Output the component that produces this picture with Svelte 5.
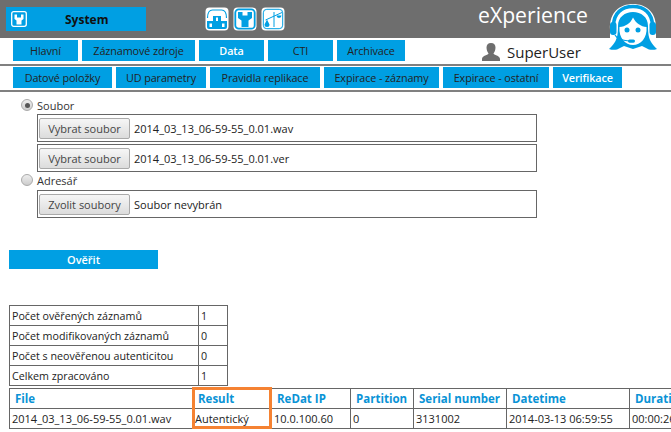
<script>
  const mainTabs = [
    { label: "Hlavní", w: 65 },
    { label: "Záznamové zdroje", w: 113 },
    { label: "Data", w: 65, active: true },
    { label: "CTI", w: 65 },
    { label: "Archivace", w: 68 },
  ];
  const subTabs = [
    { label: "Datové položky", w: 99 },
    { label: "UD parametry", w: 90 },
    { label: "Pravidla replikace", w: 110 },
    { label: "Expirace - záznamy", w: 115 },
    { label: "Expirace - ostatní", w: 106 },
    { label: "Verifikace", w: 69, active: true },
  ];
  const stats = [
    ["Počet ověřených záznamů", "1"],
    ["Počet modifikovaných záznamů", "0"],
    ["Počet s neověřenou autenticitou", "0"],
    ["Celkem zpracováno", "1"],
  ];
  const columns = [
    { label: "File", value: "2014_03_13_06-59-55_0.01.wav", w: 183 },
    { label: "Result", value: "Autentický", w: 79 },
    { label: "ReDat IP", value: "10.0.100.60", w: 79 },
    { label: "Partition", value: "0", w: 63 },
    { label: "Serial number", value: "3131002", w: 93 },
    { label: "Datetime", value: "2014-03-13 06:59:55", w: 123 },
    { label: "Duration", value: "00:00:26", w: 70 },
  ];
</script>

<div class="page">
  <header class="top">
    <div class="system">
      <svg class="sys-icon" viewBox="0 0 16 16" width="16" height="16">
        <rect x="0.7" y="0.7" width="14.6" height="14.6" rx="2" fill="none" stroke="#fff" stroke-width="1.3" />
        <path d="M3.500 3.500h2.500v3h4v-3h2.500v4.500l-2 1.500v4H5.500v-4l-2-1.500z" fill="#fff" />
      </svg>
      <span>System</span>
    </div>
    <div class="tools">
      <svg viewBox="0 0 24 24" width="24" height="24">
        <rect x="0.5" y="0.5" width="23" height="23" rx="4" fill="#fff" />
        <path d="M2.500 11c0-5 2-8 5-8h9c3 0 5 3 5 8" fill="none" stroke="#009fe3" stroke-width="1.200" />
        <path d="M2 14h6V9h8v5h6v6q0 2-2 2H4q-2 0-2-2z" fill="#009fe3" />
        <rect x="11" y="10.500" width="2" height="3.500" fill="#fff" />
        <rect x="4.500" y="16.500" width="2.500" height="3.500" fill="#fff" />
        <rect x="17" y="16.500" width="2.500" height="3.500" fill="#fff" />
      </svg>
      <svg viewBox="0 0 24 24" width="24" height="24">
        <rect x="0.5" y="0.5" width="23" height="23" rx="4" fill="#fff" />
        <rect x="2.300" y="2.300" width="19.400" height="19.400" rx="3.500" fill="none" stroke="#009fe3" stroke-width="1.800" />
        <path d="M5 5h4.500v3.500h5V5H19v6l-3.500 2.500V20h-7v-6.500L5 11z" fill="#009fe3" />
      </svg>
      <svg viewBox="0 0 24 24" width="24" height="24">
        <rect x="0.5" y="0.5" width="23" height="23" rx="4" fill="#fff" />
        <rect x="2.300" y="2.300" width="19.400" height="19.400" rx="3.500" fill="none" stroke="#009fe3" stroke-width="1" />
        <path d="M13 5v15M4.500 13L21 5.500" fill="none" stroke="#009fe3" stroke-width="1" />
        <path d="M3.500 17.500l2.500-5 2.500 5a2.500 2.500 0 0 1-5 0zM15.500 8.500h5a2.500 2.500 0 0 1-5 0z" fill="#009fe3" />
      </svg>
    </div>
    <div class="brand">eXperience</div>
  </header>

  <svg class="agent" viewBox="0 0 48 48" width="48" height="48">
    <path d="M1 26C0 8 11 0 24 0s24 8 23 26v8H1z" fill="#fff" />
    <path d="M4.500 22C4.500 9 13 2.500 24 2.500S43.500 9 43.500 22" fill="none" stroke="#009fe3" stroke-width="3.500" />
    <rect x="1" y="18" width="6.500" height="13" rx="3" fill="#009fe3" />
    <rect x="40.500" y="18" width="6.500" height="13" rx="3" fill="#009fe3" />
    <path d="M9 22C9 13 16 8 24 8s15 5 15 14c0 8 1 12 2.500 15 1.500 3 3.500 5 6.500 8-4 1.500-8 1-11-1l-4-2-9 3-9-3-4 2c-3 2-7 2.500-11 1 3-3 5-5 6.500-8C8 34 9 30 9 22z" fill="#009fe3" />
    <path d="M10.500 23c6-.5 11-3.500 13.500-9.500 3 6 8 9 13.500 9.500 1 11-6 18-13.500 18S9.500 34 10.500 23z" fill="#fff" />
    <circle cx="18" cy="26" r="2.500" fill="#009fe3" />
    <circle cx="29" cy="26" r="2.500" fill="#009fe3" />
    <path d="M6 31c2 4 7 5.500 14 6" fill="none" stroke="#009fe3" stroke-width="1.200" />
    <rect x="19" y="35.500" width="7" height="3.200" rx="1.600" fill="#009fe3" />
  </svg>

  <nav class="tabs main">
    {#each mainTabs as tab}
      <div class="tab" class:active={tab.active} style="width:{tab.w}px">{tab.label}</div>
    {/each}
    <div class="user">
      <svg viewBox="0 0 18 18" width="18" height="18">
        <path d="M9 0c3 0 4.500 2 4.500 4.500S12.500 9 11.500 10.500c0 1.500 6.500 2 6.500 5.500v2H0v-2c0-3.500 6.500-4 6.500-5.500C5.500 9 4.500 7 4.500 4.500S6 0 9 0z" fill="#6e6e6e" />
      </svg>
      <span>SuperUser</span>
    </div>
  </nav>
  <nav class="tabs sub">
    {#each subTabs as tab}
      <div class="tab" class:active={tab.active} style="width:{tab.w}px">{tab.label}</div>
    {/each}
  </nav>

  <section class="form">
    <label class="choice"><span class="radio checked"></span>Soubor</label>
    <div class="file first"><button>Vybrat soubor</button><span>2014_03_13_06-59-55_0.01.wav</span></div>
    <div class="file"><button>Vybrat soubor</button><span>2014_03_13_06-59-55_0.01.ver</span></div>
    <label class="choice"><span class="radio"></span>Adresář</label>
    <div class="file last"><button>Zvolit soubory</button><span>Soubor nevybrán</span></div>
  </section>

  <div class="verify">Ověřit</div>

  <table class="stats">
    <tbody>
      {#each stats as row}
        <tr><td class="name">{row[0]}</td><td>{row[1]}</td></tr>
      {/each}
    </tbody>
  </table>

  <div class="results-wrap">
    <table class="results">
      <colgroup>
        {#each columns as col}<col style="width:{col.w}px" />{/each}
      </colgroup>
      <thead>
        <tr>{#each columns as col}<th>{col.label}</th>{/each}</tr>
      </thead>
      <tbody>
        <tr>{#each columns as col}<td>{col.value}</td>{/each}</tr>
      </tbody>
    </table>
    <div class="highlight"></div>
  </div>
</div>

<style>
  :global(body) {
    margin: 0;
    background: #fff;
  }

  .page {
    position: relative;
    width: 671px;
    height: 432px;
    overflow: hidden;
    font-family: "Open Sans", "Noto Sans", sans-serif;
    font-size: 11px;
    color: #222;
  }

  .top {
    display: flex;
    align-items: center;
    height: 38px;
    background: #6e6e6e;
    padding-left: 6px;
    box-sizing: border-box;
  }

  .system {
    display: flex;
    align-items: center;
    width: 140px;
    height: 24px;
    box-sizing: border-box;
    padding-left: 5px;
    background: #009fe3;
    font-weight: 700;
    font-size: 12px;
    color: #111;
  }

  .system span {
    margin-left: 38px;
  }

  .tools {
    display: flex;
    gap: 4px;
    margin-left: 59px;
  }

  .brand {
    margin-left: 193px;
    margin-top: -10px;
    font-size: 21.200px;
    color: #fff;
  }

  .agent {
    position: absolute;
    left: 609px;
    top: 4px;
  }

  .tabs {
    display: flex;
    gap: 4px;
    padding-left: 13px;
    height: 21px;
  }

  .tabs.main {
    padding-top: 2px;
    padding-bottom: 3px;
    border-bottom: 2px solid #808080;
  }

  .tabs.sub {
    padding-top: 1px;
    padding-bottom: 2px;
    border-bottom: 2px solid #808080;
  }

  .tab {
    display: flex;
    align-items: center;
    justify-content: center;
    background: #009fe3;
    white-space: nowrap;
    font-size: 10.800px;
    letter-spacing: -0.1px;
  }

  .tab.active {
    color: #fff;
    font-weight: 600;
  }

  .user {
    display: flex;
    align-items: center;
    gap: 7px;
    margin: 2px 0 0 73px;
    font-size: 15px;
    color: #222;
  }

  .form {
    padding: 5px 0 0 21px;
    width: 516px;
  }

  .choice {
    display: flex;
    align-items: center;
    height: 16px;
    color: #333;
  }

  .radio {
    width: 12px;
    height: 12px;
    border-radius: 50%;
    box-sizing: border-box;
    border: 1px solid #aaa;
    background: linear-gradient(#eee, #ccc);
    margin-right: 4px;
    position: relative;
  }

  .radio.checked::after {
    content: "";
    position: absolute;
    left: 2.500px;
    top: 2.500px;
    width: 5px;
    height: 5px;
    border-radius: 50%;
    background: #555;
  }

  .file {
    display: flex;
    align-items: center;
    height: 28px;
    box-sizing: border-box;
    margin: 2px 0 0 16px;
    padding-left: 1px;
    border: 1px solid #666;
    background: #fff;
  }

  .file.first {
    margin-top: 1px;
  }

  .file.last {
    margin-top: 2px;
  }

  .file + .choice {
    margin-top: 0;
  }

  .file button {
    width: 91px;
    height: 21px;
    margin-right: 4px;
    padding: 0;
    border: 1px solid #aaa;
    border-radius: 2px;
    background: linear-gradient(#f6f6f6, #dcdcdc);
    font-family: inherit;
    font-size: 11px;
    color: #444;
  }

  .verify {
    display: flex;
    align-items: center;
    justify-content: center;
    width: 149px;
    height: 19px;
    margin: 32px 0 36px 9px;
    background: #009fe3;
    color: #fff;
    font-weight: 600;
  }

  table {
    border-collapse: collapse;
    font-size: 11px;
  }

  td, th {
    border: 1px solid #666;
    padding: 0 2px;
    height: 19px;
    white-space: nowrap;
    text-align: left;
  }

  .stats {
    margin-left: 9px;
    width: 219px;
    table-layout: fixed;
  }

  .stats td {
    font-size: 10.700px;
  }

  .stats td.name {
    width: 184px;
  }

  .results-wrap {
    position: relative;
    margin: 2px 0 0 9px;
  }

  .results {
    table-layout: fixed;
    width: 690px;
  }

  .results th {
    color: #0a93d6;
    font-weight: 700;
    font-size: 11.500px;
    padding-left: 5px;
  }

  .highlight {
    position: absolute;
    left: 183px;
    top: -1px;
    width: 74px;
    height: 36px;
    border: 3px solid #f58232;
  }
</style>
